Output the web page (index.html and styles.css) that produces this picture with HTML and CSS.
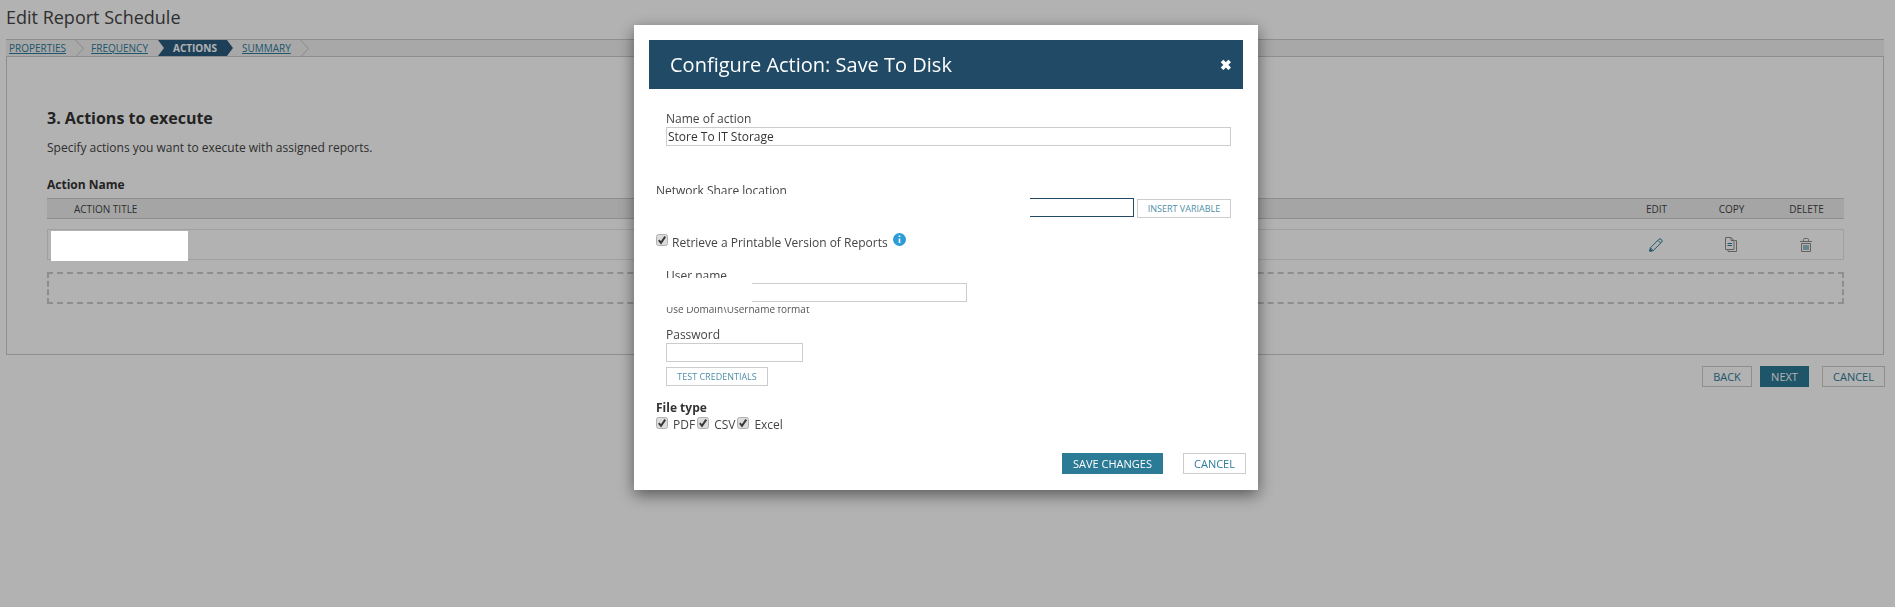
FILE: index.html
```html
<!DOCTYPE html>
<html lang="en">
<head>
<meta charset="utf-8">
<title>Edit Report Schedule</title>
<link rel="stylesheet" href="styles.css">
</head>
<body>
<svg class="defs" width="0" height="0" aria-hidden="true">
  <symbol id="tick" viewBox="0 0 12 12">
    <rect x="0.5" y="0.5" width="11" height="11" rx="2" fill="#dcdcdc" stroke="#b0b0b0"/>
    <path d="M2.8 6.2 L5 8.8 L9.2 2.6" fill="none" stroke="#3a3a3a" stroke-width="2"/>
  </symbol>
  <symbol id="chev" viewBox="0 0 9 17">
    <path d="M0.5 0 L8.5 8.5 L0.5 17" fill="none" stroke="#c4c4c4" stroke-width="1"/>
  </symbol>
</svg>

<main class="page">
  <h1 class="page-title">Edit Report Schedule</h1>
  <nav class="tabs">
    <a class="tab" href="#">Properties</a>
    <svg class="chev" width="9" height="17"><use href="#chev"/></svg>
    <a class="tab tab-second" href="#">Frequency</a>
    <span class="tab-active">Actions</span>
    <a class="tab tab-last" href="#">Summary</a>
    <svg class="chev" width="9" height="17"><use href="#chev"/></svg>
  </nav>
  <section class="panel">
    <h2 class="step-title">3. Actions to execute</h2>
    <p class="step-desc">Specify actions you want to execute with assigned reports.</p>
    <h3 class="list-title">Action Name</h3>
    <div class="grid-head">
      <span class="col-title">Action Title</span>
      <span class="col">Edit</span>
      <span class="col">Copy</span>
      <span class="col">Delete</span>
    </div>
    <div class="grid-row">
      <span class="col-title row-name"><span class="mask-row"></span></span>
      <span class="col">
        <svg width="14" height="14" viewBox="0 0 14 14" fill="none" stroke="#2c7c9b" stroke-width="1">
          <path d="M0.8 13.2 L1.4 9.8 L10 1.2 Q11 0.4 12 1.2 L12.8 2 Q13.6 3 12.8 4 L4.2 12.6 Z"/>
          <path d="M9 2.4 L11.6 5 M1.4 9.8 L4.2 12.6"/>
          <path d="M0.8 13.2 L1.2 11 L3 12.8 Z" fill="#2c7c9b"/>
        </svg>
      </span>
      <span class="col">
        <svg width="12" height="15" viewBox="0 0 12 15" fill="none" stroke="#8c8c8c" stroke-width="1">
          <path d="M0.5 0.5 H6 L9 3.5 V12.5 H0.5 Z M6 0.5 V3.5 H9"/>
          <path d="M9.5 3.5 H11.5 V14.5 H3 V12.5"/>
          <path d="M2.5 6.5 H7 M2.5 8.5 H7" stroke="#2c7c9b"/>
        </svg>
      </span>
      <span class="col">
        <svg width="12" height="14" viewBox="0 0 12 14" fill="none" stroke="#8c8c8c" stroke-width="1">
          <path d="M0 3.5 H12 M3.5 3 V1.5 Q3.5 0.5 4.5 0.5 H7.5 Q8.5 0.5 8.5 1.5 V3"/>
          <path d="M1.5 5.5 H10.5 V13.5 H1.5 Z"/>
          <path d="M4 7 V12 M6 7 V12 M8 7 V12" stroke="#2c7c9b"/>
        </svg>
      </span>
    </div>
    <div class="drop-zone"></div>
  </section>
  <div class="page-actions">
    <button class="btn btn-page" type="button">Back</button>
    <button class="btn btn-page btn-primary" type="button">Next</button>
    <button class="btn btn-page btn-far" type="button">Cancel</button>
  </div>
</main>

<div class="overlay"></div>

<div class="modal">
  <header class="modal-head">
    <h2 class="modal-title">Configure Action: Save To Disk</h2>
    <span class="modal-close">&#10006;</span>
  </header>
  <div class="field field-name">
    <label class="label">Name of action</label>
    <input class="input input-full" type="text" value="Store To IT Storage">
  </div>
  <label class="label clip-label share-label">Network Share location</label>
  <div class="share-row">
    <span class="masked">
      <input class="input input-share" type="text">
      <span class="mask mask-share"></span>
    </span>
    <button class="btn btn-small btn-insert" type="button">Insert Variable</button>
  </div>
  <div class="check-row check-print">
    <svg class="tick" width="12" height="12"><use href="#tick"/></svg>
    <span class="check-text">Retrieve a Printable Version of Reports</span>
    <svg class="info" width="13" height="13" viewBox="0 0 13 13">
      <circle cx="6.5" cy="6.5" r="6.5" fill="#2d9cd7"/>
      <path d="M6.5 2.6 V4 M6.5 5.4 V10" stroke="#fff" stroke-width="1.6" fill="none"/>
    </svg>
  </div>
  <div class="field">
    <label class="label clip-label user-label">User name</label>
    <span class="masked masked-user">
      <input class="input input-user" type="text">
      <span class="mask mask-user"></span>
    </span>
    <div class="hint">Use Domain\Username format</div>
    <label class="label pass-label">Password</label>
    <input class="input input-pass" type="password">
    <button class="btn btn-small btn-test" type="button">Test Credentials</button>
  </div>
  <div class="file-type">File type</div>
  <div class="check-row check-files">
    <svg class="tick" width="12" height="12"><use href="#tick"/></svg>
    <span class="check-text file-text">PDF</span>
    <svg class="tick" width="12" height="12"><use href="#tick"/></svg>
    <span class="check-text file-text">CSV</span>
    <svg class="tick" width="12" height="12"><use href="#tick"/></svg>
    <span class="check-text file-text">Excel</span>
  </div>
  <footer class="modal-foot">
    <button class="btn btn-modal btn-primary" type="button">Save Changes</button>
    <button class="btn btn-modal btn-cancel" type="button">Cancel</button>
  </footer>
</div>
</body>
</html>
```

FILE: styles.css
```css
* { box-sizing: border-box; }
html, body { margin: 0; padding: 0; }
body {
  height: 607px;
  overflow: hidden;
  background: #fff;
  color: #333;
  font-family: "Open Sans", "Noto Sans", sans-serif;
  font-size: 12px;
}
.defs { position: absolute; }
h1, h2, h3, p { margin: 0; font-weight: normal; }

.page { padding: 5px 11px 0 6px; }
.page-title { font-size: 18px; line-height: 24px; color: #444; }

.tabs {
  display: flex;
  align-items: center;
  height: 18px;
  margin-top: 10px;
  padding-left: 3px;
  background: #f1f1f1;
  border-top: 1px solid #ccc;
  border-bottom: 1px solid #ccc;
  font-size: 10px;
  text-transform: uppercase;
}
.tab { color: #2c7c9b; text-decoration: underline; }
.chev { margin-left: 9px; flex: none; }
.tab-second { margin-left: 7px; }
.tab-active {
  margin-left: 10px;
  padding: 0 16px 0 15px;
  height: 16px;
  line-height: 16px;
  background: #2a5c7f;
  color: #fff;
  font-weight: 700;
  clip-path: polygon(0 0, calc(100% - 6px) 0, 100% 50%, calc(100% - 6px) 100%, 0 100%, 6px 50%);
}
.tab-last { margin-left: 9px; }

.panel {
  height: 298px;
  padding: 50px 39px 0 40px;
  border: 1px solid #ccc;
  border-top: 0;
}
.step-title { font-size: 16px; line-height: 22px; font-weight: 700; color: #333; }
.step-desc { margin-top: 10px; line-height: 18px; color: #444; }
.list-title { margin-top: 19px; line-height: 18px; font-size: 12px; font-weight: 700; color: #333; }

.grid-head {
  display: flex;
  align-items: center;
  height: 21px;
  margin-top: 4px;
  background: #ededed;
  border-top: 1px solid #ccc;
  border-bottom: 1px solid #ccc;
  font-size: 10px;
  text-transform: uppercase;
  color: #444;
}
.col-title { flex: 1; padding-left: 27px; }
.col { display: flex; justify-content: center; align-items: center; width: 75px; }
.grid-row {
  display: flex;
  align-items: center;
  height: 31px;
  margin-top: 10px;
  border: 1px solid #e6e6e6;
}
.row-name { position: relative; align-self: stretch; }
.mask-row {
  position: absolute;
  z-index: 20;
  left: 3px;
  top: 1px;
  width: 137px;
  height: 30px;
  background: #fff;
}
.drop-zone { height: 32px; margin-top: 12px; border: 2px dashed #ccc; }

.page-actions { display: flex; justify-content: flex-end; gap: 8px; margin: 11px -1px 0 0; }
.btn {
  height: 21px;
  padding: 0;
  background: #fff;
  border: 1px solid #ccc;
  color: #2c7c9b;
  font-family: inherit;
  font-size: 11px;
  text-transform: uppercase;
}
.btn-page { width: 50px; }
.btn-primary { background: #2b7a96; border-color: #2b7a96; color: #fff; }
.page-actions .btn-primary { width: 49px; }
.btn-far { width: 63px; margin-left: 5px; }

.overlay { position: fixed; inset: 0; z-index: 10; background: rgba(0, 0, 0, .3); }

.modal {
  position: fixed;
  z-index: 30;
  left: 634px;
  top: 25px;
  width: 624px;
  height: 465px;
  padding: 15px 15px 0;
  background: #fff;
  box-shadow: 0 5px 15px rgba(0, 0, 0, .5);
}
.modal-head {
  display: flex;
  align-items: center;
  justify-content: space-between;
  height: 49px;
  padding: 0 11px 0 21px;
  background: #204a66;
  color: #fff;
}
.modal-title { font-size: 20px; line-height: 28px; }
.modal-close { font-size: 14px; font-weight: 700; line-height: 14px; }

.field { padding: 0 12px 0 17px; }
.field-name { margin-top: 23px; }
.label { display: block; height: 15px; line-height: 14px; color: #444; }
.input {
  display: block;
  height: 19px;
  padding: 0 1px;
  background: #fff;
  border: 1px solid #ccc;
  border-radius: 0;
  outline: 0;
  font-family: inherit;
  font-size: 12px;
  color: #333;
}
.input-full { width: 100%; }
.clip-label { overflow: hidden; }
.share-label { height: 11px; line-height: 15px; margin: 37px 0 0 7px; }
.share-row { display: flex; align-items: flex-start; gap: 3px; height: 19px; margin: 4px 0 0 7px; }
.masked { position: relative; display: block; }
.input-share { width: 478px; border-color: #204a66; }
.mask { position: absolute; top: -2px; bottom: -2px; left: -1px; background: #fff; }
.mask-share { width: 375px; }
.btn-small { font-size: 9px; height: 19px; color: #4f90a8; }
.btn-insert { width: 94px; margin-top: 1px; }

.check-row { display: flex; align-items: flex-start; margin-left: 7px; color: #444; }
.check-print { margin-top: 17px; height: 18px; }
.check-text { margin-left: 4px; line-height: 18px; }
.info { margin: -1px 0 0 5px; }

.user-label { height: 9px; line-height: 14px; margin-top: 17px; }
.masked-user { width: 301px; margin-top: 5px; }
.input-user { width: 100%; }
.mask-user { width: 87px; }
.hint { height: 7px; margin-top: 5px; overflow: hidden; font-size: 10px; line-height: 4px; color: #555; }
.pass-label { margin-top: 14px; }
.input-pass { width: 137px; }
.btn-test { display: block; width: 102px; margin-top: 5px; }

.file-type { margin: 15px 0 0 7px; line-height: 14px; font-weight: 700; color: #333; }
.check-files { margin-top: 2px; height: 16px; }
.file-text { margin-left: 5px; line-height: 16px; }
.check-files .tick { margin-left: 2px; }
.check-files .tick:first-child { margin-left: 0; }

.modal-foot { display: flex; justify-content: flex-end; gap: 20px; margin: 20px -3px 0 0; }
.btn-modal { height: 21px; }
.modal-foot .btn-primary { width: 101px; }
.btn-cancel { width: 63px; }
```
